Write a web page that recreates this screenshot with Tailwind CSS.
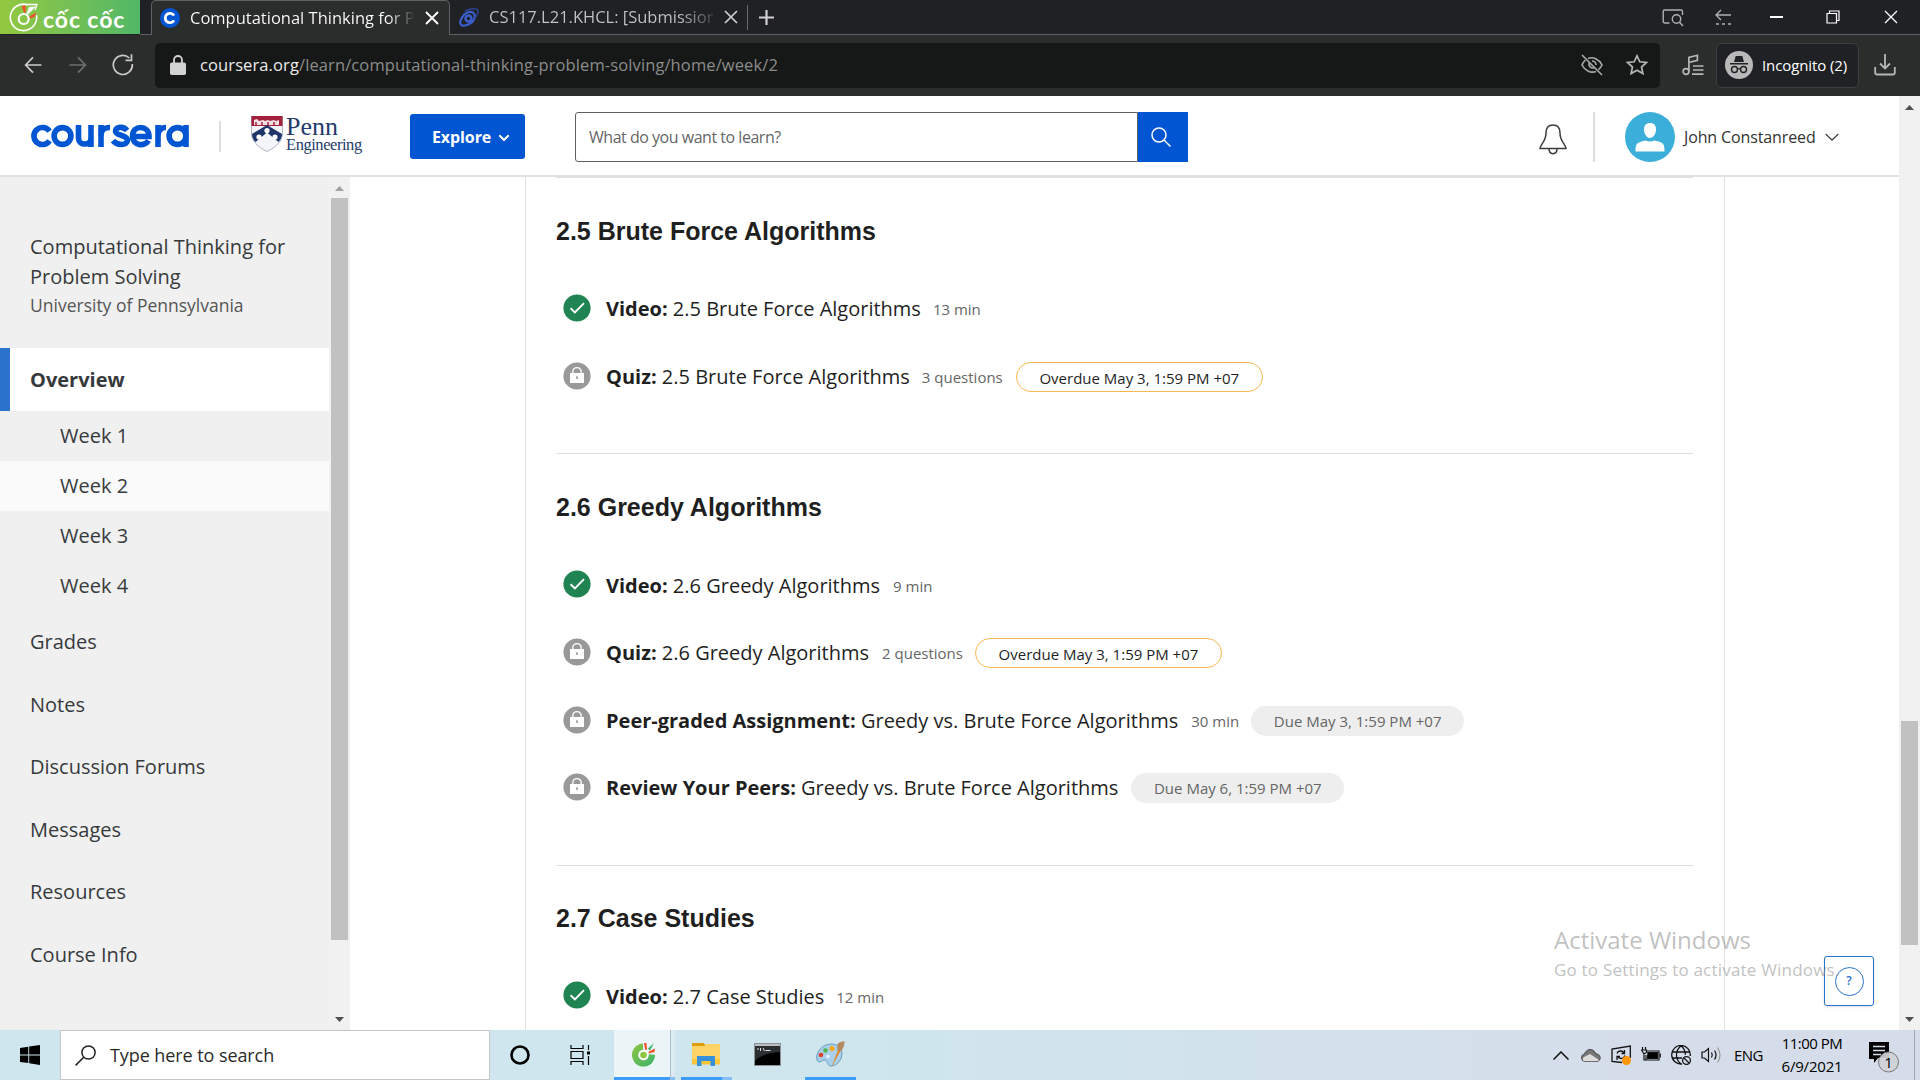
<!DOCTYPE html>
<html lang="en">
<head>
<meta charset="utf-8">
<title>Computational Thinking for Problem Solving</title>
<script src="https://cdn.jsdelivr.net/npm/@tailwindcss/browser@4"></script>
</head>
<body class="w-[1920px] h-[1080px] overflow-hidden bg-white font-['Open_Sans',sans-serif] text-[#1f1f1f]">
<svg class="absolute size-0">
  <defs>
    <symbol id="check" viewBox="0 0 28 28"><circle cx="14" cy="14" r="13.6" fill="#208352"/><path d="M7.6 14.2l4.3 4.2L21 9.2" fill="none" stroke="#fff" stroke-width="1.9"/></symbol>
    <symbol id="lock" viewBox="0 0 28 28"><circle cx="14" cy="14" r="13.6" fill="#999"/><path d="M9.8 11.500V9.800a4.200 4.200 0 0 1 8.400 0v1.700" fill="none" stroke="#fff" stroke-width="1.300"/><path fill="#fff" d="M7 11h14v10H7z"/><path fill="#999" d="M13.200 14.300h1.600v2.600h-1.600z"/></symbol>
    <linearGradient id="cc" x1="0" y1="0" x2="1" y2="1"><stop offset="0" stop-color="#8dc63f"/><stop offset="1" stop-color="#39b36b"/></linearGradient>
  </defs>
</svg>
<div class="flex h-[1080px] flex-col">

  <!-- tab strip -->
  <div class="flex h-[35px] shrink-0 items-stretch bg-[#202124]">
    <div class="flex h-[34px] w-[140px] items-center bg-linear-to-r from-[#93c83e] to-[#4fb866]">
      <svg class="ml-[9px] size-[30px]" viewBox="0 0 30 30" fill="none"><path d="M19 3A13.200 13.200 0 1 0 27.500 13" stroke="#fff" stroke-width="1.600"/><path d="M13 2.500h15L26 8" stroke="#fff" stroke-width="1.300"/><path d="M12.500 4l4-.500.500 7h-2z" fill="#f4512c"/><path d="M20 5l7-.500-8 8-1.500-1z" fill="#fff"/><path d="M19 15.500l8-5-1 4-6 2.500z" fill="#f4512c"/><circle cx="14.700" cy="17" r="5" stroke="#fff" stroke-width="2.200"/></svg>
      <span class="ml-[4px] mt-[5px] whitespace-nowrap font-['Lato'] text-[23px] font-bold leading-none tracking-[0.900px] text-white">cốc cốc</span>
    </div>
    <div class="w-[11px] border-b border-[#5f6063]"></div>
    <div class="flex w-[299px] items-center rounded-t-[5px] border-x border-t border-[#5f6063] bg-[#2b2c2c] pl-[8px]">
      <svg class="size-[20px] shrink-0" viewBox="0 0 20 20"><circle cx="10" cy="10" r="10" fill="#0056d2"/><path d="M14 12.400A4.700 4.700 0 1 1 14 7.600" fill="none" stroke="#fff" stroke-width="2.800"/></svg>
      <div class="ml-[10px] w-[225px] overflow-hidden whitespace-nowrap bg-linear-to-r from-white from-88% to-transparent bg-clip-text text-[16.500px] text-transparent">Computational Thinking for Problem</div>
      <svg class="ml-[10px] size-[14px]" viewBox="0 0 14 14" stroke="#fff" stroke-width="1.800"><path d="M1 1l12 12M13 1L1 13"/></svg>
    </div>
    <div class="flex flex-1 items-center border-b border-[#5f6063] pl-[9px]">
      <svg class="size-[20px] shrink-0" viewBox="0 0 20 20" fill="none" stroke="#3b5fd0"><circle cx="9.500" cy="11.500" r="3" stroke-width="2.400"/><path d="M6 18.500c-4 1-6-2-4-6C4 8 6 5.500 10 5c5-.500 7 3 5 7.500-1.500 3.500-4.500 5-9 6z" stroke-width="2.200"/><path d="M6 4c5-3 12-3 13-.500s-2 6-4 8.500" stroke="#2d4796" stroke-width="1.500"/></svg>
      <div class="ml-[10px] w-[224px] overflow-hidden whitespace-nowrap bg-linear-to-r from-[#c3c5c8] from-85% to-[#c3c5c8]/20 bg-clip-text text-[16.500px] text-transparent">CS117.L21.KHCL: [Submission</div>
      <svg class="ml-[11px] size-[14px]" viewBox="0 0 14 14" stroke="#d0d0d0" stroke-width="1.700"><path d="M1 1l12 12M13 1L1 13"/></svg>
      <div class="ml-[9px] h-[25px] w-px bg-[#6a6b6e]"></div>
      <svg class="ml-[11px] size-[15px]" viewBox="0 0 15 15" stroke="#d0d0d0" stroke-width="2.200"><path d="M7.500 0v15M0 7.500h15"/></svg>
      <div class="ml-auto flex items-center pr-[22px]">
        <svg class="mt-[2px] size-[22px]" viewBox="0 0 22 22" fill="none" stroke="#aeb0b2" stroke-width="1.400"><path d="M7.500 16H3a1.800 1.800 0 0 1-1.800-1.800V4A1.800 1.800 0 0 1 3 3h16a1.500 1.500 0 0 1 1.500 1.500V8"/><circle cx="14.500" cy="12" r="4.200"/><path d="M17.500 15.200l3.500 3.800"/></svg>
        <svg class="ml-[30px] mt-[2px] size-[18px]" viewBox="0 0 18 18" fill="none" stroke="#aeb0b2" stroke-width="1.400"><path d="M17 6H2M7 1L2 6l5 5"/><path d="M2 15h16" stroke-dasharray="3 3"/></svg>
        <div class="ml-[38px] h-[1.500px] w-[13px] bg-white"></div>
        <svg class="ml-[43px] size-[14px]" viewBox="0 0 14 14" fill="none" stroke="#fff" stroke-width="1.200"><path d="M1 3.500h9.500V13H1zM3.500 3.500V1H13v9.500h-2.500"/></svg>
        <svg class="ml-[44px] size-[14px]" viewBox="0 0 14 14" stroke="#fff" stroke-width="1.300"><path d="M1 1l12 12M13 1L1 13"/></svg>
      </div>
    </div>
  </div>

  <!-- toolbar -->
  <div class="flex h-[61px] shrink-0 items-center bg-[#2b2c2c] pb-[1px]">
    <svg class="ml-[24px] size-[18px]" viewBox="0 0 18 18" fill="none" stroke="#c9c9c9" stroke-width="1.700"><path d="M17.500 9H2M9 1.300L1.600 9 9 16.700"/></svg>
    <svg class="ml-[27px] size-[18px]" viewBox="0 0 18 18" fill="none" stroke="#6d6e6e" stroke-width="1.700"><path d="M.500 9H16M9 1.300L16.400 9 9 16.700"/></svg>
    <svg class="ml-[25px] size-[22px]" viewBox="0 0 22 22" fill="none" stroke="#c9c9c9" stroke-width="1.700"><path d="M20.300 10a9.500 9.500 0 1 1-3-6"/><path d="M13.500 6.300h6V.300"/></svg>
    <div class="ml-[21px] flex h-[45px] w-[1505px] items-center rounded-[5px] bg-[#161817]">
      <svg class="ml-[15px] h-[20px] w-[16px]" viewBox="0 0 16 20"><path d="M4 8V5a4 4 0 0 1 8 0v3" fill="none" stroke="#d2d2d2" stroke-width="1.800"/><rect y="7.500" width="16" height="12.500" rx="1.800" fill="#d2d2d2"/></svg>
      <div class="ml-[14px] whitespace-nowrap text-[16.500px] tracking-[0.110px] text-[#8b8c8c]"><span class="text-[#ececec]">coursera.org</span>/learn/computational-thinking-problem-solving/home/week/2</div>
      <svg class="ml-auto size-[22px]" viewBox="0 0 22 22" fill="none" stroke="#a9abab" stroke-width="1.600"><path d="M1 1l20 20"/><path d="M7 4.500C12 2.500 18 5 21 11c-1 2-2 3.500-3.500 4.600M4.500 6C3 7.200 1.900 9 1 11c3 6 9 8.300 14 6.500"/><path d="M8.300 8.500a4 4 0 0 0 5.200 5.200M11 7a4 4 0 0 1 4 4"/></svg>
      <svg class="ml-[23px] mr-[12px] size-[22px]" viewBox="0 0 22 22" fill="none" stroke="#b5b7b7" stroke-width="1.700"><path d="M11 1.800l2.800 6 6.600.700-4.900 4.500 1.400 6.600L11 16.300l-5.900 3.300 1.400-6.600L1.600 8.500l6.600-.700z"/></svg>
    </div>
    <svg class="ml-[22px] size-[22px]" viewBox="0 0 22 22" fill="none" stroke="#b5b7b7" stroke-width="1.700"><circle cx="4" cy="17.500" r="2.900"/><path d="M6.900 17.500V3.500l8.500-2.200v5L6.900 8.500M11 12h10.500M11 16h10.500M10 20.200h11.500"/></svg>
    <div class="ml-[12px] flex h-[45px] w-[143px] items-center rounded-[6px] border border-[#3d3e40] bg-[#202124]">
      <svg class="ml-[8px] size-[28px]" viewBox="0 0 28 28"><circle cx="14" cy="14" r="14" fill="#b9b9b9"/><g fill="none" stroke="#202124" stroke-width="1.400"><circle cx="9.500" cy="18.500" r="3"/><circle cx="18.500" cy="18.500" r="3"/><path d="M12.500 18q1.500-.800 3 0M5 12.800h18"/></g><path fill="#202124" d="M9 11l1.700-6h6.600L19 11z"/></svg>
      <span class="ml-[9px] whitespace-nowrap text-[15px] tracking-[-0.100px] text-white">Incognito (2)</span>
    </div>
    <svg class="ml-[15px] size-[22px]" viewBox="0 0 22 22" fill="none" stroke="#b5b7b7" stroke-width="1.800"><path d="M11 0v14M6 9.500l5 5 5-5M1.200 13v5.500a2 2 0 0 0 2 2h15.600a2 2 0 0 0 2-2V13"/></svg>
  </div>

  <div class="flex h-[934px] shrink-0">
    <div class="flex w-[1899px] flex-col">
      <!-- site header -->
      <header class="flex h-[81px] shrink-0 items-center border-b-2 border-[#e1e1e1] pt-[2px]">
        <svg class="ml-[29px] -mt-[1px] h-[24px] w-[160px]" viewBox="0 0 160 24" role="img" aria-label="coursera" fill="none" stroke="#0056d2" stroke-width="5.600">
          <path d="M20.500 7.300A8.500 8.500 0 1 0 20.500 16.700"/><circle cx="33.500" cy="12" r="8.400"/><path d="M49.500 1v13c0 8 12.500 8 12.500 0V1M62 1v22M72 23V1M72 12c0-6 3-8.500 9-8.500M98 6.500c-3-4.200-11.500-4.200-11.500.500 0 5.500 12 3 12 9.500 0 5-10.500 5.500-14.500 0M103.500 12.500h16.500c0-12-16.500-12-16.500-.500 0 10 12.500 11 16 4.500M129 23V1M129 12c0-6 3-8.500 8-8.500M157 1v22"/><circle cx="148.500" cy="12" r="8.400"/>
        </svg>
        <div class="ml-[30px] h-[31px] w-[2px] bg-[#dedede]"></div>
        <div class="ml-[30px] flex h-[41px] w-[110px] items-start">
          <svg class="h-[36px] w-[32px] shrink-0" viewBox="0 0 32 36"><path d="M.500 0h31v17c0 8-6 14-15.500 18.500C6.500 31 .500 25 .500 17z" fill="#f4f5f8" stroke="#9aa0b5" stroke-width=".800"/><path d="M.500 0h31v10H.500z" fill="#a3213d"/><path d="M3 8V4l3-1 2 2 4-1 2 1 3-1 2 1 4-1 2 1 3-1v5H3z" fill="#f3dfe3"/><path d="M5 9V6M11 9V6M17 9V6M23 9V6" stroke="#a3213d" stroke-width="1.500"/><path d="M1 18L16 9l15 9c0 3-1.500 6-3.500 8L16 16.500 4.500 26C2.500 24 1 21 1 18z" fill="#1f3468"/><g fill="#fff"><circle cx="16" cy="14.500" r="2.600"/><circle cx="8" cy="21" r="2.600"/><circle cx="24" cy="21" r="2.600"/></g></svg>
          <div class="ml-[3px] flex flex-col whitespace-nowrap font-['Liberation_Serif'] text-[#263a6b]">
            <span class="h-[20px] text-[26px] leading-[22px]">Penn</span>
            <span class="text-[16.500px] leading-[18px] tracking-[-0.450px]">Engineering</span>
          </div>
        </div>
        <button class="ml-[49px] flex h-[45px] w-[115px] items-center rounded-[3px] bg-[#0056d2] pl-[22px] text-white"><span class="text-[16px] font-bold tracking-[-0.100px]">Explore</span><svg class="ml-[7px] mt-[2px] h-[8px] w-[12px]" viewBox="0 0 12 8" fill="none" stroke="#fff" stroke-width="2"><path d="M1.300 1.300L6 6l4.700-4.700"/></svg></button>
        <div class="ml-[50px] flex h-[50px] w-[563px] items-center whitespace-nowrap rounded-l-[3px] border border-[#5f6062] pl-[13px] text-[16px] tracking-[-0.480px] text-[#666]">What do you want to learn?</div>
        <div class="flex h-[50px] w-[50px] items-center justify-center bg-[#0056d2]"><svg class="-ml-[5px] size-[20px]" viewBox="0 0 20 20" fill="none" stroke="#fff" stroke-width="1.500"><circle cx="8" cy="8" r="7"/><path d="M13 13l6.500 6.500"/></svg></div>
        <svg class="ml-[351px] mt-[5px] h-[31px] w-[28px]" viewBox="0 0 28 31" fill="none" stroke="#3c3c3c" stroke-width="1.500"><path d="M14 1c-5 0-7 3.500-7 8 0 9-6 11.500-6 15.500h26C27 20.500 21 18 21 9c0-4.500-2-8-7-8zM10 24.800c0 6.500 8 6.500 8 0"/></svg>
        <div class="ml-[26px] h-[50px] w-[2px] bg-[#dedede]"></div>
        <svg class="ml-[30px] size-[50px]" viewBox="0 0 50 50"><circle cx="25" cy="25" r="25" fill="#3bafda"/><path fill="#fff" d="M25 11c4 0 6 2.500 6 6.500S28.500 26 25 26s-6-4.500-6-8.500 2-6.500 6-6.500zM10.500 39.500c0-8 1-9 10-11q4.500 2 9 0c9 2 10 3 10 11z"/></svg>
        <span class="ml-[9px] w-[132px] whitespace-nowrap text-[16px] tracking-[-0.120px] text-[#333]">John Constanreed</span>
        <svg class="ml-[9px] h-[8px] w-[14px]" viewBox="0 0 14 8" fill="none" stroke="#444" stroke-width="1.300"><path d="M.600 1L7 7l6.400-6"/></svg>
      </header>

      <div class="flex h-[853px]">
        <!-- course sidebar -->
        <aside class="flex w-[350px] bg-[#f0f0f0] text-[20px] text-[#373a3c]">
          <nav class="w-[329px]">
            <div class="h-[171px] pl-[30px] pt-[55px] leading-[30px]">
              <div class="whitespace-nowrap">Computational Thinking for</div>
              <div class="whitespace-nowrap">Problem Solving</div>
              <div class="whitespace-nowrap text-[17.500px] leading-[27px] text-[#555]">University of Pennsylvania</div>
            </div>
            <div class="flex h-[63px] items-center border-l-[10px] border-[#2a73cc] bg-white pl-[20px] font-bold">Overview</div>
            <div class="flex h-[50px] items-center pl-[60px]">Week 1</div>
            <div class="flex h-[50px] items-center bg-[#fafafa] pl-[60px]">Week 2</div>
            <div class="flex h-[50px] items-center pl-[60px]">Week 3</div>
            <div class="flex h-[50px] items-center pl-[60px]">Week 4</div>
            <div class="flex h-[62.500px] items-center pl-[30px]">Grades</div>
            <div class="flex h-[62.500px] items-center pl-[30px]">Notes</div>
            <div class="flex h-[62.500px] items-center pl-[30px]">Discussion Forums</div>
            <div class="flex h-[62.500px] items-center pl-[30px]">Messages</div>
            <div class="flex h-[62.500px] items-center pl-[30px]">Resources</div>
            <div class="flex h-[62.500px] items-center pl-[30px]">Course Info</div>
          </nav>
          <div class="flex w-[21px] flex-col items-center bg-[#f1f1f1]">
            <svg class="mt-[9px] h-[5px] w-[9px]" viewBox="0 0 9 5"><path d="M0 5L4.500 0 9 5z" fill="#a0a0a0"/></svg>
            <div class="mt-[7px] h-[742px] w-[17px] bg-[#c1c1c1]"></div>
            <svg class="mb-[8px] mt-auto h-[5px] w-[9px]" viewBox="0 0 9 5"><path d="M0 0h9L4.500 5z" fill="#505050"/></svg>
          </div>
        </aside>

        <!-- week content -->
        <main class="ml-[175px] h-[853px] w-[1200px] overflow-hidden border-x border-[#e1e1e1] pl-[30px] pr-[31px] text-[20px]">
          <section class="h-[276px] border-t border-[#dedede]">
            <h2 class="flex h-[96px] items-center pt-[12px] font-['Liberation_Sans',sans-serif] text-[25px] font-bold">2.5 Brute Force Algorithms</h2>
            <div class="flex h-[68px] items-center pl-[7px]"><svg class="size-[28px]"><use href="#check"/></svg><div class="ml-[15px] flex items-center pt-[2px]"><span><b>Video:</b> 2.5 Brute Force Algorithms</span><span class="ml-[12px] text-[15px] text-[#666]">13 min</span></div></div>
            <div class="flex h-[68px] items-center pl-[7px]"><svg class="size-[28px]"><use href="#lock"/></svg><div class="ml-[15px] flex items-center pt-[2px]"><span><b>Quiz:</b> 2.5 Brute Force Algorithms</span><span class="ml-[12px] text-[15px] text-[#666]">3 questions</span><span class="ml-[13px] flex h-[30px] w-[247px] items-center justify-center rounded-full border border-[#f5b74f] pt-[3px] text-[15px]">Overdue May 3, 1:59 PM +07</span></div></div>
          </section>
          <section class="h-[412px] border-t border-[#dedede]">
            <h2 class="flex h-[96px] items-center pt-[12px] font-['Liberation_Sans',sans-serif] text-[25px] font-bold">2.6 Greedy Algorithms</h2>
            <div class="flex h-[68px] items-center pl-[7px]"><svg class="size-[28px]"><use href="#check"/></svg><div class="ml-[15px] flex items-center pt-[4px]"><span><b>Video:</b> 2.6 Greedy Algorithms</span><span class="ml-[13px] text-[15px] text-[#666]">9 min</span></div></div>
            <div class="flex h-[68px] items-center pl-[7px]"><svg class="size-[28px]"><use href="#lock"/></svg><div class="ml-[15px] flex items-center pt-[2px]"><span><b>Quiz:</b> 2.6 Greedy Algorithms</span><span class="ml-[13px] text-[15px] text-[#666]">2 questions</span><span class="ml-[12px] flex h-[30px] w-[247px] items-center justify-center rounded-full border border-[#f5b74f] pt-[3px] text-[15px]">Overdue May 3, 1:59 PM +07</span></div></div>
            <div class="flex h-[67px] items-center pl-[7px]"><svg class="size-[28px]"><use href="#lock"/></svg><div class="ml-[15px] flex items-center pt-[3px]"><span><b>Peer-graded Assignment:</b> Greedy vs. Brute Force Algorithms</span><span class="ml-[13px] text-[15px] text-[#666]">30 min</span><span class="ml-[12px] flex h-[30px] w-[213px] items-center justify-center rounded-full bg-[#eee] pt-[1px] text-[15px] text-[#666]">Due May 3, 1:59 PM +07</span></div></div>
            <div class="flex h-[68px] items-center pl-[7px]"><svg class="size-[28px]"><use href="#lock"/></svg><div class="ml-[15px] flex items-center pt-[2px]"><span><b>Review Your Peers:</b> Greedy vs. Brute Force Algorithms</span><span class="ml-[13px] flex h-[30px] w-[213px] items-center justify-center rounded-full bg-[#eee] pt-[1px] text-[15px] text-[#666]">Due May 6, 1:59 PM +07</span></div></div>
          </section>
          <section class="border-t border-[#dedede]">
            <h2 class="flex h-[96px] items-center pt-[10px] font-['Liberation_Sans',sans-serif] text-[25px] font-bold">2.7 Case Studies</h2>
            <div class="flex h-[68px] items-center pl-[7px]"><svg class="-mt-[2px] size-[28px]"><use href="#check"/></svg><div class="ml-[15px] flex items-center pt-[2px]"><span><b>Video:</b> 2.7 Case Studies</span><span class="ml-[12px] text-[15px] text-[#666]">12 min</span></div></div>
          </section>
        </main>
      </div>
    </div>
    <!-- page scrollbar -->
    <div class="flex w-[21px] flex-col items-center bg-[#f1f1f1]">
      <svg class="mt-[9px] h-[5px] w-[9px]" viewBox="0 0 9 5"><path d="M0 5L4.500 0 9 5z" fill="#505050"/></svg>
      <div class="mt-[611px] h-[224px] w-[17px] bg-[#c1c1c1]"></div>
      <svg class="mb-[8px] mt-auto h-[5px] w-[9px]" viewBox="0 0 9 5"><path d="M0 0h9L4.500 5z" fill="#505050"/></svg>
    </div>
  </div>

  <!-- taskbar -->
  <div class="flex h-[50px] shrink-0 items-stretch bg-linear-to-r from-[#cfe6ee] from-45% to-[#d5ddea] to-85% text-black">
    <div class="flex w-[60px] items-center justify-center"><svg class="size-[20px]" viewBox="0 0 20 20"><path d="M0 3l8.300-1.200v7.700H0zM9.200 1.600L20 0v9.500H9.200zM0 10.400h8.300v7.700L0 17zM9.200 10.400H20V20L9.200 18.300z"/></svg></div>
    <div class="flex w-[430px] items-center border border-[#c4c6c7] bg-white pl-[14px]"><svg class="size-[21px]" viewBox="0 0 21 21" fill="none" stroke="#222" stroke-width="1.500"><circle cx="13.500" cy="7.500" r="6.600"/><path d="M8.700 12.300L.600 20.400"/></svg><span class="ml-[14px] text-[18px] tracking-[-0.080px] text-[#2a2a2a]">Type here to search</span></div>
    <div class="flex w-[60px] items-center justify-center"><svg class="size-[20px]" viewBox="0 0 20 20"><circle cx="10" cy="10" r="8.500" fill="none" stroke="#000" stroke-width="2.600"/></svg></div>
    <div class="flex w-[64px] items-center justify-center pr-[3px]"><svg class="size-[21px]" viewBox="0 0 21 21" fill="none" stroke="#000" stroke-width="1.200"><path d="M1 0v3.500h12V0M1 20v-3.500h12V20M1 6.500h12v7H1zM18.500 0v5M18.500 11v9"/><path d="M17 6.500h3v3h-3z" fill="#000" stroke="none"/></svg></div>
    <div class="flex w-[57px] flex-col border-r border-[#a9c1cb] bg-[#ebf4f7]"><svg class="ml-[17px] mt-[12px] size-[25px]" viewBox="0 0 25 25"><circle cx="12.500" cy="13" r="11.500" fill="url(#cc)"/><path d="M12 0h13v13l-9-1-4-4z" fill="#ebf4f7"/><circle cx="12.500" cy="13" r="4.300" fill="#8dc63f" stroke="#fff" stroke-width="2"/><path d="M13 1l2.500 0 .500 7-2-.500z M18 9.500l6-3-.500 3.500-6 1.500z" fill="#f4512c"/><path d="M17 6.500l6-5.500-4 7.500z" fill="#39b36b"/></svg><div class="mt-auto h-[3px] bg-[#3c9cf8]"></div></div>
    <div class="flex w-[4px] flex-col justify-end bg-[#dcebf1]"><div class="h-[3px] bg-[#84bdf8]"></div></div>
    <div class="ml-[6px] flex w-[51px] flex-col"><svg class="ml-[11px] mt-[12px] h-[25px] w-[28px]" viewBox="0 0 28 25"><path d="M0 1.500Q0 1 1 1h11l1.500 3H0z" fill="#e09f08"/><path d="M0 4h13l1-2h13q1 0 1 1v19H0z" fill="#ffd467"/><path d="M0 17h28v5.500H0z" fill="#fbc63a"/><path d="M5 24V14h18v10h-4.500v-5h-9v5z" fill="#3591d9"/></svg><div class="mt-auto flex h-[3px]"><div class="w-[41px] bg-[#3c9cf8]"></div><div class="w-[10px] bg-[#84bdf8]"></div></div></div>
    <svg class="ml-[22px] mt-[13px] h-[23px] w-[27px]" viewBox="0 0 27 23"><rect x=".5" y=".5" width="26" height="22" fill="#000" stroke="#8c9296"/><path d="M1 1h25v2H1z" fill="#b9c0c4"/><path d="M1 3h25v6Q8 10 1 18z" fill="#2c2f31"/><path d="M3 6h2M6.500 5v3M9 5l1.500 3M11.500 7.500h5" stroke="#ddd"/></svg>
    <div class="ml-[24px] flex w-[51px] flex-col"><svg class="ml-[10px] mt-[10px] size-[30px]" viewBox="0 0 30 30"><path d="M2 20C0 12 8 4 16 4c8 0 11 5 11 9 0 8-6 13-11 13-4 0-3-5-6-6s-5 5-8 0z" fill="#a9cfea" stroke="#6d9cc0"/><circle cx="6" cy="15" r="2.300" fill="#e0402a"/><circle cx="10.500" cy="10.500" r="2.300" fill="#4fb748"/><circle cx="17" cy="8.500" r="2.500" fill="#f9a90e"/><circle cx="13" cy="16.500" r="1.800" fill="#e8f4fb"/><path d="M16 28l7-18 2.500 1z" fill="#e08a2c"/><path d="M22.500 11c0-4-1-6 1-8 2-1.500 4-1 6-2 0 4-1 8-4 10.500z" fill="#b58a5e"/></svg><div class="mt-auto h-[3px] bg-[#3c9cf8]"></div></div>
    <div class="ml-auto flex items-center">
      <svg class="h-[9px] w-[16px]" viewBox="0 0 16 9" fill="none" stroke="#111" stroke-width="1.500"><path d="M.500 8.500L8 1l7.500 7.500"/></svg>
      <svg class="ml-[12px] h-[14px] w-[20px]" viewBox="0 0 20 14"><path d="M4 13.500a3.800 3.800 0 0 1-.500-7.500C5 1.500 10 0 13 3c1 1 1.500 2 1.700 2.800 5 0 6.500 6.500 1.300 7.700z" fill="#777" stroke="#333" stroke-width=".800"/><path d="M4 13.200c-2.500 0-3-3-1-4.200L9 6l9 6q-1 1.200-3 1.200z" fill="#dcdcdc"/></svg>
      <svg class="ml-[10px] size-[20px]" viewBox="0 0 20 20" fill="none" stroke="#111" stroke-width="1.300"><path d="M11 17.500L1 16.500V4L19.300 1v12"/><path d="M6 8.500c1-3 5.500-3.500 7-.500M13.500 5v3.500h-3M14 10.500c-1 3.500-5.500 4-7.500 1M6 15v-3.500h3"/><circle cx="15.500" cy="15.500" r="4.500" fill="#ff9500" stroke="none"/></svg>
      <svg class="ml-[10px] h-[16px] w-[20px]" viewBox="0 0 20 16" fill="none" stroke="#111" stroke-width="1.200"><path d="M1.500 0v3M4.500 0v3M.500 3h5v2.500L3 7zM3 7v6h2"/><path d="M6 4h12v9H5V8"/><path d="M7 5.500h9.500v6H6.500z" fill="#000"/><path d="M19.300 6.500v4"/></svg>
      <svg class="ml-[10px] size-[20px]" viewBox="0 0 20 20" fill="none" stroke="#111" stroke-width="1.300"><path d="M11 19A9.300 9.300 0 1 1 19.200 11M1 7h18M1 13h10M10 .800C4 6 4 14 10 19M10 .800c3 2.500 4.500 6 4.300 9"/><circle cx="15.500" cy="15.500" r="3.900"/><path d="M13 13l5 5"/></svg>
      <svg class="ml-[10px] h-[18px] w-[20px]" viewBox="0 0 20 18" fill="none" stroke="#111" stroke-width="1.200"><path d="M1 6h2.500L7.500 2.500v13L3.500 12H1z"/><path d="M10.500 6.500q1.500 2.500 0 5M13.500 4.500q3 4.500 0 9"/><path d="M16.500 1.500q5 7.500 0 15" stroke="#999"/></svg>
      <span class="ml-[13px] w-[29px] whitespace-nowrap text-[15px] tracking-[-0.600px]">ENG</span>
      <div class="ml-[19px] flex w-[60px] flex-col items-center whitespace-nowrap text-[15px] leading-[23px]"><span class="tracking-[-0.500px]">11:00 PM</span><span class="tracking-[-0.200px]">6/9/2021</span></div>
      <svg class="ml-[27px] mt-[5px] h-[31px] w-[31px]" viewBox="0 0 31 31"><path d="M0 0h20v16H9l-4 5v-4H0z"/><path d="M4 4.500h12M4 8.500h12M4 12.500h8" stroke="#d5ddea" stroke-width="1.300"/><circle cx="19.500" cy="20" r="10" fill="#d0d2d6" fill-opacity=".93" stroke="#777"/><text x="19.500" y="25.500" text-anchor="middle" font-family="Open Sans" font-size="15">1</text></svg>
      <div class="ml-[14px] h-[50px] w-px bg-[#9fa8b5]"></div><div class="w-[5px]"></div>
    </div>
  </div>
</div>

<!-- help button and activation notice float over the page -->
<div class="absolute left-[1824px] top-[956px] flex size-[50px] items-center justify-center rounded-[3px] border border-[#2a73cc] bg-white shadow"><div class="flex size-[29px] items-center justify-center rounded-full border border-[#2a73cc] text-[12px] font-semibold text-[#2a73cc]">?</div></div>
<div class="absolute left-[1554px] top-[922px] whitespace-nowrap text-[#8c8c8c]/55">
  <div class="h-[33px] text-[24px] leading-[36px]">Activate Windows</div>
  <div class="text-[17px] leading-[30px] tracking-[0.200px]">Go to Settings to activate Windows.</div>
</div>
</body>
</html>
